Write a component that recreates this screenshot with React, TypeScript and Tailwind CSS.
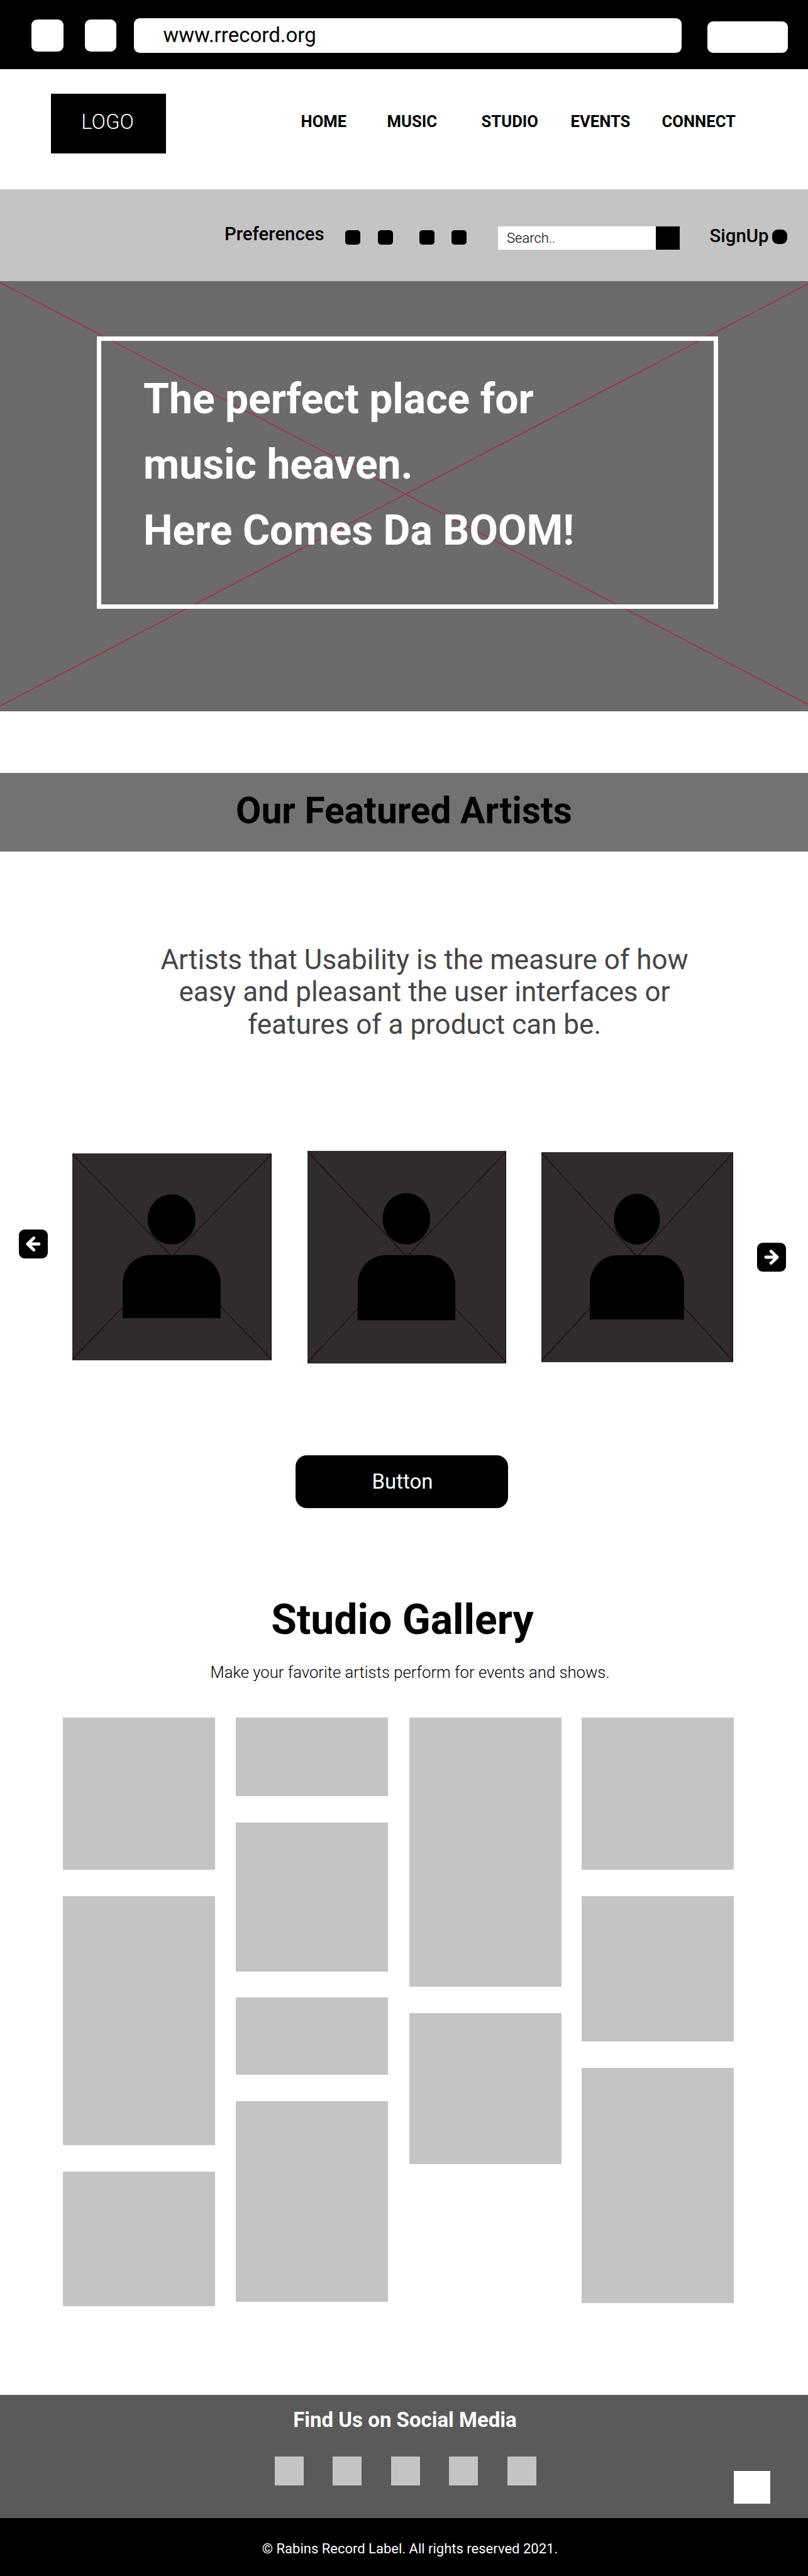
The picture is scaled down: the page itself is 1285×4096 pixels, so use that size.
import React from "react";

const navItems = [
  { label: "HOME", width: "w-[137px]" },
  { label: "MUSIC", width: "w-[150px]" },
  { label: "STUDIO", width: "w-[142px]" },
  { label: "EVENTS", width: "w-[145px]" },
  { label: "CONNECT", width: "w-[130px]" },
];

const preferenceDots = ["ml-0", "ml-[28px]", "ml-[42px]", "ml-[27px]"];

const galleryColumns = [
  { margin: "ml-0", tiles: ["h-[242px]", "h-[396px]", "h-[214px]"] },
  { margin: "ml-[33px]", tiles: ["h-[125px]", "h-[236.5px]", "h-[123px]", "h-[319px]"] },
  { margin: "ml-[34px]", tiles: ["h-[427.5px]", "h-[240px]"] },
  { margin: "ml-[32px]", tiles: ["h-[242px]", "h-[231px]", "h-[374.5px]"] },
];

function BrowserBar() {
  return (
    <div className="flex h-[110px] items-start bg-black pl-[50px]">
      <div className="mt-[31px] h-[51px] w-[51px] rounded-[9px] bg-white" />
      <div className="mt-[31px] ml-[34px] h-[51px] w-[50px] rounded-[9px] bg-white" />
      <div className="mt-[29px] ml-[28px] h-[55px] w-[871px] rounded-[9px] bg-white pl-[46.5px] text-[33px] leading-[53px]">
        www.rrecord.org
      </div>
      <div className="mt-[34px] ml-[41px] h-[50px] w-[128px] rounded-[9px] bg-white" />
    </div>
  );
}

function Header() {
  return (
    <header className="flex h-[191px] items-start bg-white pl-[81px]">
      <div className="mt-[39px] h-[95px] w-[183px] bg-black pr-[3px] text-center text-[33px] leading-[90px] font-light text-white">
        LOGO
      </div>
      <nav className="mt-[70px] ml-[214.5px] flex text-[25.68px] leading-[26px] font-bold">
        {navItems.map((item) => (
          <a key={item.label} className={item.width}>
            {item.label}
          </a>
        ))}
      </nav>
    </header>
  );
}

function PreferencesBar() {
  return (
    <div className="flex h-[146px] items-start bg-[#c4c4c4] pl-[357px]">
      <span className="mt-[56px] w-[192px] text-[29.35px] leading-[30px] font-medium">Preferences</span>
      <div className="mt-[65px] flex">
        {preferenceDots.map((margin, i) => (
          <span key={i} className={`h-[23px] w-[24px] rounded-[5px] bg-black ${margin}`} />
        ))}
      </div>
      <div className="mt-[58.5px] ml-[50px] flex h-[37px]">
        <div className="w-[251px] bg-white pl-[14px] text-[22px] leading-[37px] font-light">Search..</div>
        <div className="w-[37.5px] bg-black" />
      </div>
      <span className="mt-[59px] ml-[48px] w-[99.5px] text-[29.35px] leading-[30px] font-medium">SignUp</span>
      <span className="mt-[64px] h-[23px] w-[24px] rounded-[9px] bg-black" />
    </div>
  );
}

function Hero() {
  return (
    <section className="relative h-[684px] bg-[#6d6a6b] pt-[88px] pl-[154px]">
      <svg className="absolute inset-0 h-full w-full" viewBox="0 0 1285 684" fill="none" stroke="#b01e42" strokeWidth="1.2">
        <path d="M0 2L1285 673M1285 4.6L0 675.6" />
      </svg>
      <div className="relative h-[433px] w-[988px] border-[7.5px] border-white pt-[40.5px] pl-[67px] text-[66.04px] leading-[104.5px] font-bold text-white">
        <h1>
          The perfect place for
          <br />
          music heaven.
          <br />
          Here Comes Da BOOM!
        </h1>
      </div>
    </section>
  );
}

function ArrowButton({ flip = false }: { flip?: boolean }) {
  return (
    <button className="flex h-[46px] w-[46px] shrink-0 items-center justify-center rounded-[9px] bg-black">
      <svg
        className={flip ? "h-[24px] w-[24px] rotate-180" : "h-[24px] w-[24px]"}
        viewBox="0 0 24 24"
        fill="none"
        stroke="white"
        strokeWidth="4.9"
        strokeLinecap="round"
        strokeLinejoin="round"
      >
        <path d="M12.8 2.6L3 12l9.8 9.4M4 12h17" />
      </svg>
    </button>
  );
}

function ArtistCard({ className }: { className: string }) {
  return (
    <svg className={`shrink-0 ${className}`} viewBox="0 0 345.6 358.7" preserveAspectRatio="none">
      <rect width="345.6" height="358.7" fill="#302b2d" />
      <path d="M0.5 1.5L345 356M345 1.5L0.5 356M345 1V357" fill="none" stroke="#1c060c" strokeWidth="1.2" />
      <ellipse cx="172" cy="114.4" rx="41.5" ry="43.4" fill="black" />
      <path d="M87.3 285.7V225a49 49 0 0 1 49-49h71.9a49 49 0 0 1 49 49v60.7z" fill="black" />
    </svg>
  );
}

function Artists() {
  return (
    <section>
      <h2 className="h-[125px] bg-[#727272] text-center text-[58.7px] leading-[121px] font-bold">Our Featured Artists</h2>
      <p className="mt-[147px] ml-[225px] w-[900px] text-center text-[44.03px] leading-[51.3px] text-[#454545]">
        Artists that Usability is the measure of how
        <br />
        easy and pleasant the user interfaces or
        <br />
        features of a product can be.
      </p>
      <div className="mt-[175px] flex h-[338px] items-start pl-[30px]">
        <div className="mt-[125.5px]">
          <ArrowButton />
        </div>
        <ArtistCard className="mt-[4px] ml-[39px] h-[329px] w-[317px]" />
        <ArtistCard className="ml-[57px] h-[338px] w-[316px]" />
        <ArtistCard className="mt-[2px] ml-[56px] h-[334px] w-[305px]" />
        <div className="mt-[146.5px] ml-[38px]">
          <ArrowButton flip />
        </div>
      </div>
      <button className="mt-[146px] ml-[470px] block h-[84px] w-[338px] rounded-[18px] bg-black pl-[2px] text-center text-[33px] leading-[84px] text-white">
        Button
      </button>
    </section>
  );
}

function Gallery() {
  return (
    <section className="h-[1410px] pt-[145px]">
      <h2 className="h-[66px] w-[1280px] text-center text-[66.04px] leading-[66px] font-bold text-[#040000]">Studio Gallery</h2>
      <p className="mt-[35px] h-[30px] pl-[19px] text-center text-[25.68px] leading-[30px] font-light text-[#040000]">
        Make your favorite artists perform for events and shows.
      </p>
      <div className="mt-[57.5px] flex items-start pl-[100px]">
        {galleryColumns.map((column, i) => (
          <div key={i} className={`flex w-[242px] flex-col gap-[41.7px] ${column.margin}`}>
            {column.tiles.map((height, j) => (
              <div key={j} className={`bg-[#c4c4c4] ${height}`} />
            ))}
          </div>
        ))}
      </div>
    </section>
  );
}

function Footer() {
  return (
    <footer>
      <div className="h-[196px] bg-[#5a5a5a] pt-[20px]">
        <h3 className="pl-[3px] text-center text-[33px] leading-[40px] font-bold text-white">Find Us on Social Media</h3>
        <div className="flex items-start pl-[437px]">
          <div className="mt-[38px] flex gap-[46.4px]">
            {[0, 1, 2, 3, 4].map((i) => (
              <span key={i} className="h-[46px] w-[46px] bg-[#c4c4c4]" />
            ))}
          </div>
          <span className="mt-[61px] ml-[314.4px] h-[52px] w-[58px] bg-white" />
        </div>
      </div>
      <p className="h-[92px] bg-black pt-[30.5px] pl-[19px] text-center text-[22px] leading-[38px] text-white">
        © Rabins Record Label. All rights reserved 2021.
      </p>
    </footer>
  );
}

export default function App() {
  return (
    <div className="h-[4096px] w-[1285px] overflow-hidden bg-white font-['Roboto',sans-serif] text-black">
      <BrowserBar />
      <Header />
      <PreferencesBar />
      <Hero />
      <div className="h-[98px]" />
      <Artists />
      <Gallery />
      <Footer />
    </div>
  );
}
